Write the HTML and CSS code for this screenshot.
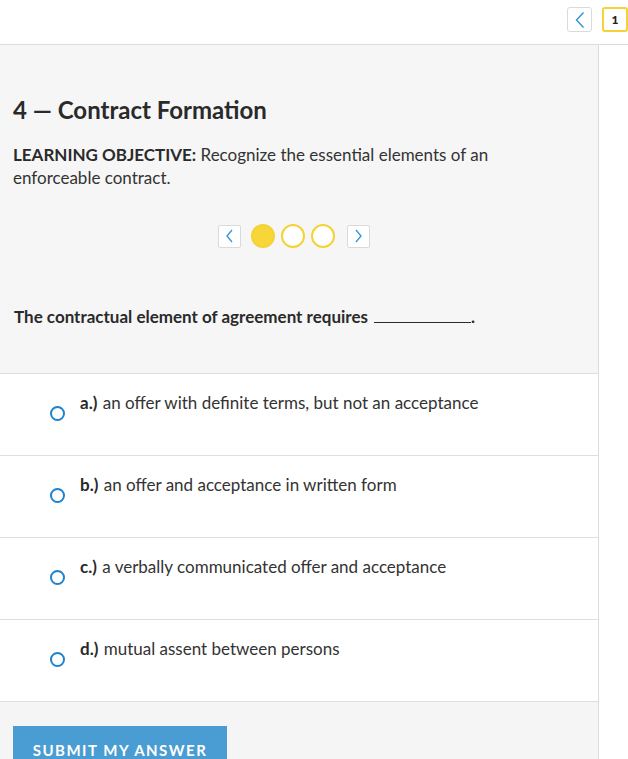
FILE: index.html
```html
<!DOCTYPE html>
<html lang="en">
<head>
<meta charset="utf-8">
<title>Contract Formation</title>
<link rel="stylesheet" href="styles.css">
</head>
<body>
<header class="topbar">
  <button class="nav-btn" aria-label="Previous">
    <svg width="12" height="18" viewBox="0 0 12 18"><path d="M9.5 1.5 L2.5 9 L9.5 16.5" fill="none" stroke="#2f94d9" stroke-width="1.4"/></svg>
  </button>
  <div class="page-box">1</div>
</header>
<div class="layout">
  <main class="main">
    <section class="intro">
      <h1 class="title">4 — Contract Formation</h1>
      <p class="objective"><strong>LEARNING OBJECTIVE:</strong> Recognize the essential elements of an enforceable contract.</p>
      <div class="carousel">
        <button class="small-btn" aria-label="Previous">
          <svg width="9" height="14" viewBox="0 0 9 14"><path d="M7 1 L2 7 L7 13" fill="none" stroke="#2f94d9" stroke-width="1.3"/></svg>
        </button>
        <span class="dot filled"></span>
        <span class="dot"></span>
        <span class="dot"></span>
        <button class="small-btn next" aria-label="Next">
          <svg width="9" height="14" viewBox="0 0 9 14"><path d="M2 1 L7 7 L2 13" fill="none" stroke="#2f94d9" stroke-width="1.3"/></svg>
        </button>
      </div>
      <p class="question">The contractual element of agreement requires <span class="blank"></span>.</p>
    </section>
    <ul class="options">
      <li class="option"><span class="radio"></span><span class="label"><b>a.)</b> an offer with definite terms, but not an acceptance</span></li>
      <li class="option"><span class="radio"></span><span class="label"><b>b.)</b> an offer and acceptance in written form</span></li>
      <li class="option"><span class="radio"></span><span class="label"><b>c.)</b> a verbally communicated offer and acceptance</span></li>
      <li class="option"><span class="radio"></span><span class="label"><b>d.)</b> mutual assent between persons</span></li>
    </ul>
    <div class="footer">
      <button class="submit">SUBMIT MY ANSWER</button>
    </div>
  </main>
  <aside class="side"></aside>
</div>
</body>
</html>
```

FILE: styles.css
```css
html, body {
  margin: 0;
  padding: 0;
  height: 100%;
  overflow: hidden;
}
body {
  font-family: "Lato", "Liberation Sans", sans-serif;
  color: #2b2b2b;
  background: #fff;
}
.topbar {
  border-bottom: 1px solid #dcdcdc;
  display: flex;
  justify-content: flex-end;
  align-items: flex-start;
  gap: 10px;
  padding-top: 7px;
  box-sizing: border-box;
  height: 45px;
}
.nav-btn {
  width: 25px;
  height: 25px;
  border: 1.5px solid #d9dadd;
  border-radius: 3px;
  background: #fff;
  padding: 0;
  display: flex;
  align-items: center;
  justify-content: center;
}
.page-box {
  width: 26px;
  height: 25px;
  box-sizing: border-box;
  border: 2px solid #f5d238;
  border-radius: 3px;
  font-weight: 900;
  font-size: 12px;
  display: flex;
  align-items: center;
  justify-content: center;
  color: #222;
}
.layout {
  display: flex;
  height: calc(100% - 45px);
}
.main {
  width: 598px;
  border-right: 1px solid #dcdcdc;
  display: flex;
  flex-direction: column;
  background: #f5f5f5;
}
.side {
  flex: 1;
  background: #fff;
}
.intro {
  background: #f6f6f6;
  padding: 51px 13px 45px;
  border-bottom: 1px solid #dedede;
}
.title {
  margin: 0;
  font-size: 24px;
  line-height: 28px;
  font-weight: 700;
  color: #2a2a2a;
}
.objective {
  margin: 19px 0 0;
  max-width: 500px;
  font-size: 17px;
  line-height: 23px;
  color: #333;
}
.objective strong {
  font-weight: 700;
  color: #2a2a2a;
}
.carousel {
  margin-top: 35px;
  display: flex;
  justify-content: center;
  align-items: center;
  gap: 6px;
  padding-right: 10px;
}
.small-btn {
  width: 23px;
  height: 23px;
  box-sizing: border-box;
  border: 1.5px solid #d9dadd;
  border-radius: 2px;
  background: #fff;
  padding: 0;
  display: flex;
  align-items: center;
  justify-content: center;
  margin-right: 4px;
}
.small-btn.next {
  margin-right: 0;
  margin-left: 6px;
}
.dot {
  width: 24px;
  height: 24px;
  box-sizing: border-box;
  border-radius: 50%;
  border: 2px solid #f5d238;
  background: #fff;
}
.dot.filled {
  background: #f7d638;
}
.question {
  margin: 58px 0 0 1px;
  font-size: 17px;
  line-height: 22px;
  font-weight: 700;
  color: #2a2a2a;
}
.blank {
  display: inline-block;
  width: 97px;
  height: 15px;
  border-bottom: 1.5px solid #2a2a2a;
  vertical-align: baseline;
  margin-left: 2px;
}
.options {
  list-style: none;
  margin: 0;
  padding: 0;
  background: #fff;
}
.option {
  height: 81px;
  border-bottom: 1px solid #dedede;
  display: flex;
  align-items: flex-start;
}
.radio {
  width: 15px;
  height: 15px;
  box-sizing: border-box;
  border: 2px solid #1d82cf;
  border-radius: 50%;
  margin: 32px 0 0 50px;
  flex: none;
}
.label {
  margin: 18px 0 0 15px;
  font-size: 17px;
  line-height: 22px;
  color: #333;
}
.label b {
  font-weight: 700;
  color: #2a2a2a;
  margin-right: 1px;
}
.footer {
  flex: 1;
  background: #f5f5f5;
  padding: 24px 13px 0;
}
.submit {
  width: 214px;
  height: 48px;
  border: 0;
  background: #4a9dd3;
  color: #fff;
  font-family: "Lato", "Liberation Sans", sans-serif;
  font-weight: 700;
  font-size: 15px;
  letter-spacing: 1.5px;
  padding: 0;
}
```
